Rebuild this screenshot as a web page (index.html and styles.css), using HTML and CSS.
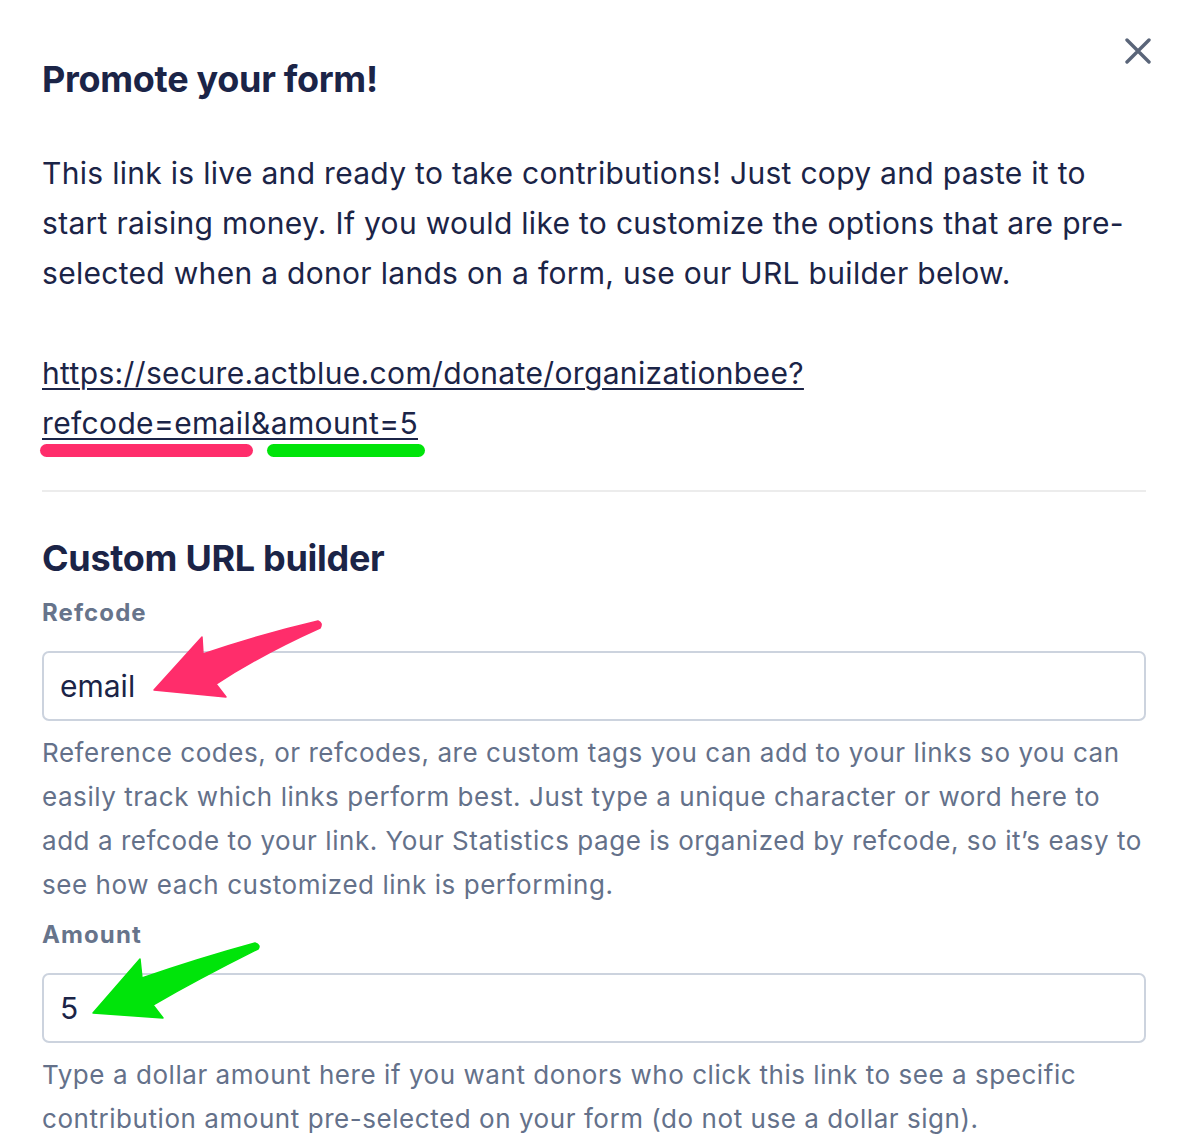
FILE: index.html
```html
<!DOCTYPE html>
<html lang="en">
<head>
    <meta charset="UTF-8">
    <meta name="viewport" content="width=device-width, initial-scale=1.0">
    <title>Promote your form</title>
    <link rel="stylesheet" href="styles.css">
</head>
<body>
    <div class="modal">
        <button class="close" aria-label="Close">
            <svg width="26" height="26" viewBox="0 0 26 26">
                <path d="M2 2 L24 24 M24 2 L2 24" stroke="currentColor" stroke-width="3.4" stroke-linecap="round" fill="none"/>
            </svg>
        </button>

        <h2 class="title">Promote your form!</h2>

        <p class="intro">This link is live and ready to take contributions! Just copy and paste it to start raising money. If you would like to customize the options that are pre-selected when a donor lands on a form, use our URL builder below.</p>

        <p class="link-wrap">
            <a class="link" href="#">https://secure.actblue.com/donate/organizationbee?<br>refcode=email&amp;amount=5</a>
            <span class="mark mark-pink"></span>
            <span class="mark mark-green"></span>
        </p>

        <hr class="divider">

        <h2 class="title builder-title">Custom URL builder</h2>

        <div class="field">
            <label class="label" for="refcode">Refcode</label>
            <input class="input" id="refcode" type="text" value="email">
            <p class="help">Reference codes, or refcodes, are custom tags you can add to your links so you can easily track which links perform best. Just type a unique character or word here to add a refcode to your link. Your Statistics page is organized by refcode, so it’s easy to see how each customized link is performing.</p>
        </div>

        <div class="field">
            <label class="label" for="amount">Amount</label>
            <input class="input" id="amount" type="text" value="5">
            <p class="help">Type a dollar amount here if you want donors who click this link to see a specific contribution amount pre-selected on your form (do not use a dollar sign).</p>
        </div>

        <!-- annotation arrows drawn over the form -->
        <svg class="arrows" width="1184" height="1148" viewBox="0 0 1184 1148">
            <path d="M318 621 Q323 623 320 628 Q262 654 216 684 L226 697 L154 690 L202 637 L203 654 Q262 634 318 621 Z" fill="#ff2d6b" stroke="#ff2d6b" stroke-width="1.5" stroke-linejoin="round"/>
            <path d="M255 943 Q261 945 258 949 Q200 978 153 1005 L163 1018 L93 1013 L140 959 L142 978 Q200 958 255 943 Z" fill="#00e40a" stroke="#00e40a" stroke-width="1.5" stroke-linejoin="round"/>
        </svg>
    </div>
</body>
</html>
```

FILE: styles.css
```css
* {
    margin: 0;
    padding: 0;
    box-sizing: border-box;
}

body {
    font-family: Inter, "Noto Sans", sans-serif;
    background: #fff;
    color: #1b2447;
}

.modal {
    position: relative;
    padding: 57px 38px 0 42px;
    min-height: 1148px;
}

.close {
    position: absolute;
    top: 38px;
    right: 33px;
    border: 0;
    background: none;
    color: #5a6579;
    display: flex;
}

.title {
    font-size: 36px;
    line-height: 44px;
    font-weight: 700;
    letter-spacing: -0.3px;
}

.intro {
    margin-top: 47px;
    font-size: 30px;
    line-height: 50px;
    letter-spacing: 0.3px;
}

.link-wrap {
    position: relative;
    margin-top: 50px;
    font-size: 30px;
    line-height: 50px;
    letter-spacing: 0.35px;
}

.link {
    color: #1b2447;
    text-decoration: underline;
    text-decoration-thickness: 2px;
    text-underline-offset: 4px;
}

.mark {
    position: absolute;
    top: 96px;
    height: 13px;
    border-radius: 7px;
}

.mark-pink {
    left: -2px;
    width: 213px;
    background: #ff2d6b;
}

.mark-green {
    left: 225px;
    width: 158px;
    background: #00e40a;
}

.divider {
    margin-top: 42px;
    border: 0;
    border-top: 2px solid #ececec;
}

.builder-title {
    margin-top: 44px;
}

.field {
    display: flex;
    flex-direction: column;
}

.label {
    margin-top: 17px;
    font-size: 24px;
    line-height: 32px;
    font-weight: 700;
    color: #67748b;
    letter-spacing: 1.1px;
}

.field + .field .label {
    margin-top: 12px;
}

.input {
    margin-top: 22px;
    height: 70px;
    border: 2px solid #ccd3de;
    border-radius: 7px;
    padding: 0 16px;
    font-family: Inter, "Noto Sans", sans-serif;
    font-size: 30px;
    color: #1b2447;
    background: #fff;
}

.help {
    margin-top: 10px;
    font-size: 26px;
    line-height: 44px;
    color: #64718a;
    letter-spacing: 0.55px;
}

.arrows {
    position: absolute;
    top: 0;
    left: 0;
    pointer-events: none;
}
```
